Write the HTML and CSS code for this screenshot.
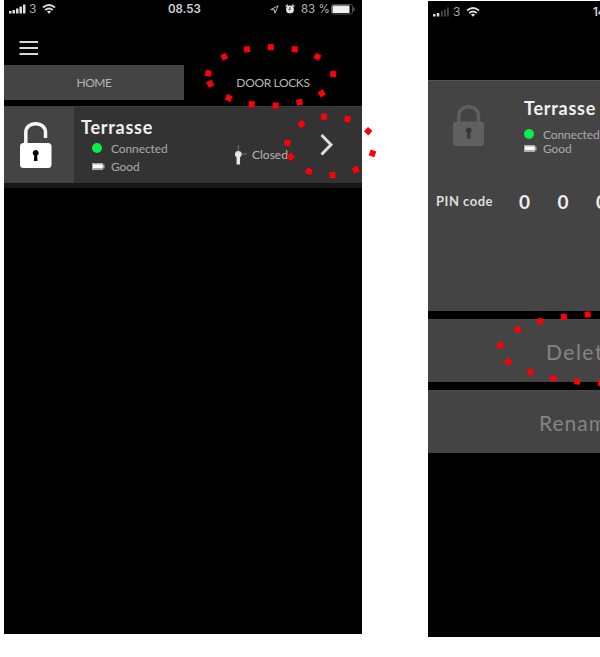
FILE: index.html
```
<!DOCTYPE html>
<html lang="en">
<head>
<meta charset="utf-8">
<title>Door locks</title>
<link rel="stylesheet" href="styles.css">
</head>
<body>
<main class="stage">
  <section class="phone phone-list">
    <header class="status">
      <svg class="signal" width="17" height="10" viewBox="0 0 17 10"><path fill="#ddd" d="M0 7h2.500v2.500H0zM3.500 6H6v3.500H3.500zM7 4.500h2.500v5H7zM10.500 2.500H13v7h-2.500zM14 .5h2.500v9H14z"/></svg>
      <span class="carrier">3</span>
      <svg class="wifi" width="14" height="10" viewBox="0 0 14 10"><g fill="none" stroke="#ddd" stroke-width="1.900"><path d="M1 3.500Q7-1.300 13 3.500M3.200 6Q7 2.900 10.800 6"/></g><path fill="#ddd" d="M4.800 7.500Q7 5.800 9.200 7.500L7 9.700z"/></svg>
      <time class="clock">08.53</time>
      <svg class="location" width="9" height="9" viewBox="0 0 9 9"><path d="M.8 4.600L8.200.8L4.900 8.200L4.400 4.800z" fill="none" stroke="#bbb"/></svg>
      <svg class="alarm" width="10" height="10" viewBox="0 0 10 10"><circle cx="5" cy="5.400" r="3.900" fill="#e5e5e5"/><path d="M.8 2.500L2.800.8M9.200 2.500L7.200.8" stroke="#ddd" stroke-width="1.500"/><path d="M5 3v2.700h-1.500" fill="none" stroke="#333"/></svg>
      <span class="percent">83 %</span>
      <svg class="battery" width="25" height="11" viewBox="0 0 25 11"><rect x=".5" y=".5" width="21" height="9.500" rx="2" fill="none" stroke="#555"/><path fill="#eee" d="M1.500 1.500h17v7.500h-17z"/><path d="M23 3.500v3.500" stroke="#555" stroke-width="1.500"/></svg>
    </header>
    <div class="toolbar">
      <svg width="20" height="16" viewBox="0 0 20 16"><path d="M.5 2h18.500M.5 8h18.500M.5 14h18.500" stroke="#d8d8d8" stroke-width="2"/></svg>
    </div>
    <nav class="tabs">
      <span class="tab tab-home"><span class="home-text">HOME</span></span>
      <span class="tab"><span class="locks-text">DOOR LOCKS</span></span>
    </nav>
    <article class="lock-row">
      <div class="lock-state">
        <svg width="32" height="47" viewBox="0 0 32 47"><path d="M5.800 24V10.500C5.800-1.200 25.500-1.200 25.500 10.500V16" fill="none" stroke="#f4f4f4" stroke-width="3.500"/><rect x="0" y="21" width="31.500" height="25" rx="3.500" fill="#fff"/><path d="M15.700 28a3 3 0 0 1 1.500 5.600l.3 5.400h-3.600l.3-5.400a3 3 0 0 1 1.500-5.600z" fill="#000"/></svg>
      </div>
      <div class="lock-info">
        <h1 class="name">Terrasse</h1>
        <p class="detail"><i class="dot"></i><span class="connected">Connected</span></p>
        <p class="detail"><svg class="cell" width="13" height="7" viewBox="0 0 13 7"><path d="M0 0h11v1.500h1.500v4H11V7H0z" fill="#aaa"/><path d="M1 1.500h9.500v3.500H1z" fill="#fff"/></svg><span>Good</span></p>
      </div>
      <div class="door">
        <svg width="14" height="22" viewBox="0 0 14 22"><path d="M4.300 0v8M4 9h9" stroke="#777"/><circle cx="4.300" cy="9.300" r="3.300" fill="#e2e2e2"/><path d="M4.300 9v10.500" stroke="#e8e8e8" stroke-width="3.500"/></svg>
        <span class="closed">Closed</span>
      </div>
      <svg class="chevron" width="14" height="22" viewBox="0 0 14 22"><path d="M1.500 1L11 10.700L1.500 20.500" fill="none" stroke="#ddd" stroke-width="3"/></svg>
    </article>
  </section>

  <section class="phone phone-detail">
    <header class="status">
      <svg class="signal" width="17" height="10" viewBox="0 0 17 10"><path fill="#ddd" d="M0 7h2.500v2.500H0zM3.800 6h2.500v3.500H3.800z"/><path fill="#454545" d="M8 4h1.800v5.500H8zM11 2.500h1.800v7H11zM14 .5h1.800v9H14z"/></svg>
      <span class="carrier">3</span>
      <svg class="wifi" width="14" height="10" viewBox="0 0 14 10"><g fill="none" stroke="#ddd" stroke-width="1.900"><path d="M1 3.500Q7-1.300 13 3.500M3.200 6Q7 2.900 10.800 6"/></g><path fill="#ddd" d="M4.800 7.500Q7 5.800 9.200 7.500L7 9.700z"/></svg>
      <time class="clock">14</time>
    </header>
    <article class="panel">
      <div class="summary">
        <svg class="locked" width="32" height="42" viewBox="0 0 32 42"><path d="M5.800 19V11C5.800-1.500 25.500-1.500 25.500 11V19" fill="none" stroke="#5e5e5e" stroke-width="3.500"/><rect y="16.500" width="31" height="24.500" rx="3" fill="#606060"/><path d="M15.700 22.500a3 3 0 0 1 1.500 5.600l.3 5.400h-3.600l.3-5.400a3 3 0 0 1 1.500-5.600z" fill="#393939"/></svg>
        <div class="lock-info">
          <h1 class="name">Terrasse</h1>
          <p class="detail"><i class="dot"></i><span class="connected">Connected</span></p>
          <p class="detail"><svg class="cell" width="13" height="7" viewBox="0 0 13 7"><path d="M0 0h11v1.500h1.500v4H11V7H0z" fill="#aaa"/><path d="M1 1.500h9.500v3.500H1z" fill="#fff"/></svg><span>Good</span></p>
        </div>
      </div>
      <div class="pin"><span class="pin-label">PIN code</span><b>0</b><b>0</b><b>0</b></div>
    </article>
    <div class="action"><span class="delete">Delete</span></div>
    <div class="action"><span class="rename">Rename</span></div>
  </section>

  <svg class="callouts" width="600" height="657" viewBox="0 0 600 657">
    <defs><rect id="d" x="-3" y="-3" width="6" height="6" fill="#ff0008"/></defs>
    <use href="#d" transform="translate(224.300 56.700) rotate(-28)"/><use href="#d" transform="translate(247 49.300) rotate(-8)"/><use href="#d" transform="translate(270.800 47.200)"/><use href="#d" transform="translate(294.800 49.300) rotate(10)"/><use href="#d" transform="translate(317.400 56.800) rotate(28)"/><use href="#d" transform="translate(333.200 74) rotate(3)"/><use href="#d" transform="translate(321.700 93.400) rotate(-30)"/><use href="#d" transform="translate(299.500 102.300) rotate(-12)"/><use href="#d" transform="translate(275.700 105.500)"/><use href="#d" transform="translate(251.700 104.200) rotate(5)"/><use href="#d" transform="translate(228.700 98) rotate(22)"/><use href="#d" transform="translate(210.200 83.700) rotate(65)"/><use href="#d" transform="translate(208.300 73.200) rotate(-80)"/>
    <use href="#d" transform="translate(324 116.800) rotate(-4)"/><use href="#d" transform="translate(347.500 119) rotate(14)"/><use href="#d" transform="translate(368.200 131.200) rotate(43)"/><use href="#d" transform="translate(372.500 153.400) rotate(-70)"/><use href="#d" transform="translate(355.800 169.700) rotate(-24)"/><use href="#d" transform="translate(332.500 175.200)"/><use href="#d" transform="translate(309 171.400) rotate(18)"/><use href="#d" transform="translate(290.800 156.700) rotate(50)"/><use href="#d" transform="translate(287.400 142.800) rotate(-75)"/><use href="#d" transform="translate(301.400 124.100) rotate(-28)"/>
    <use href="#d" transform="translate(587.700 314.500) rotate(-4)"/><use href="#d" transform="translate(563.800 316.800) rotate(-7)"/><use href="#d" transform="translate(540.200 321.300) rotate(-14)"/><use href="#d" transform="translate(517.800 329.400) rotate(-24)"/><use href="#d" transform="translate(500.400 345.300) rotate(-80)"/><use href="#d" transform="translate(508.400 361.700) rotate(38)"/><use href="#d" transform="translate(530.400 372.200) rotate(20)"/><use href="#d" transform="translate(553.400 378.300) rotate(10)"/><use href="#d" transform="translate(577.200 381.500) rotate(6)"/><use href="#d" transform="translate(601 383)"/>
  </svg>
</main>
</body>
</html>
```
FILE: styles.css
```
* { box-sizing: border-box; }
body { margin: 0; background: #fff; font-family: Lato, "Liberation Sans", sans-serif; overflow: hidden; }
.stage { position: relative; display: flex; gap: 66px; width: 600px; height: 657px; padding-left: 4px; overflow: hidden; }
.phone { flex: none; width: 358px; background: #000; color: #b5b5b5; }
.phone svg { display: block; flex: none; }
.phone-list { height: 634px; }
.phone-detail { height: 636px; margin-top: 1px; }
.status { display: flex; height: 20px; padding-left: 5px; font: 12px/18px Inter, sans-serif; }
.signal { margin-top: 4px; }
.carrier { width: 8px; margin-left: 3px; color: #aaa; }
.wifi { margin: 4px 0 0 5px; }
.clock { width: 40px; margin-left: 112px; color: #d5d5d5; font-weight: 600; font-size: 11.5px; letter-spacing: 0; }
.location { margin: 5px 0 0 62px; }
.alarm { margin: 4px 0 0 6px; }
.percent { width: 29px; margin-left: 6px; white-space: nowrap; font-size: 11.5px; }
.battery { margin: 4px 0 0 1px; }
.toolbar { height: 45px; padding: 20px 0 0 15px; }
.tabs { display: flex; height: 35px; }
.tab { width: 178px; display: flex; justify-content: center; font-size: 12px; line-height: 35px; }
.tab-home { width: 180px; background: #444; }
.home-text { letter-spacing: -.4px; }
.locks-text { letter-spacing: -.35px; }
.lock-row { display: flex; height: 82px; margin-top: 6px; background: #333; border-top: 1px solid #3d3d3d; border-bottom: 5px solid #171717; }
.lock-state { width: 70px; padding: 15px 0 0 16px; background: #444; }
.lock-info { width: 136px; padding: 10px 0 0 7px; }
.name { margin: 0 0 2px; color: #f1f1f1; font-size: 18px; line-height: 20px; font-weight: 700; letter-spacing: .75px; }
.detail { display: flex; align-items: center; height: 18px; margin: 0; padding-left: 11px; font-size: 12px; letter-spacing: -.1px; color: #aaa; }
.dot { width: 10px; height: 10px; margin-right: 9px; border-radius: 50%; background: #08ed49; }
.cell { margin-right: 6px; }
.door { display: flex; width: 94px; padding: 38px 0 0 24px; font-size: 12px; }
.closed { margin: 1px 0 0 4px; line-height: 18px; }
.chevron { margin: 27px 0 0 16px; }
.phone-detail .status { padding: 2px 0 0 5px; }
.phone-detail .clock { margin-left: 113px; }
.panel { height: 231px; margin-top: 59px; background: #444; border-top: 1px solid #555; }
.summary { display: flex; height: 100px; padding: 24px 0 0 25px; }
.phone-detail .lock-info { padding: 0 0 0 39px; margin-top: -8px; }
.phone-detail .name { margin: 0; line-height: 22px; }
.phone-detail .detail { height: 14px; padding: 0; }
.phone-detail .name + .detail { margin-top: 8px; }
.pin { display: flex; align-items: center; height: 40px; padding-left: 8px; color: #eee; }
.pin-label { width: 83px; font-size: 13px; font-weight: 700; letter-spacing: .5px; color: #ddd; }
.pin b { width: 38.5px; font-size: 19px; }
.action { display: flex; justify-content: center; align-items: center; height: 63px; margin-top: 8px; background: #444; border-top: 1px solid #4b4b4b; color: #858585; font-size: 21px; }
.delete { width: 122px; letter-spacing: 1.5px; }
.rename { width: 136px; letter-spacing: 1px; }
.callouts { position: absolute; left: 0; top: 0; }
```
